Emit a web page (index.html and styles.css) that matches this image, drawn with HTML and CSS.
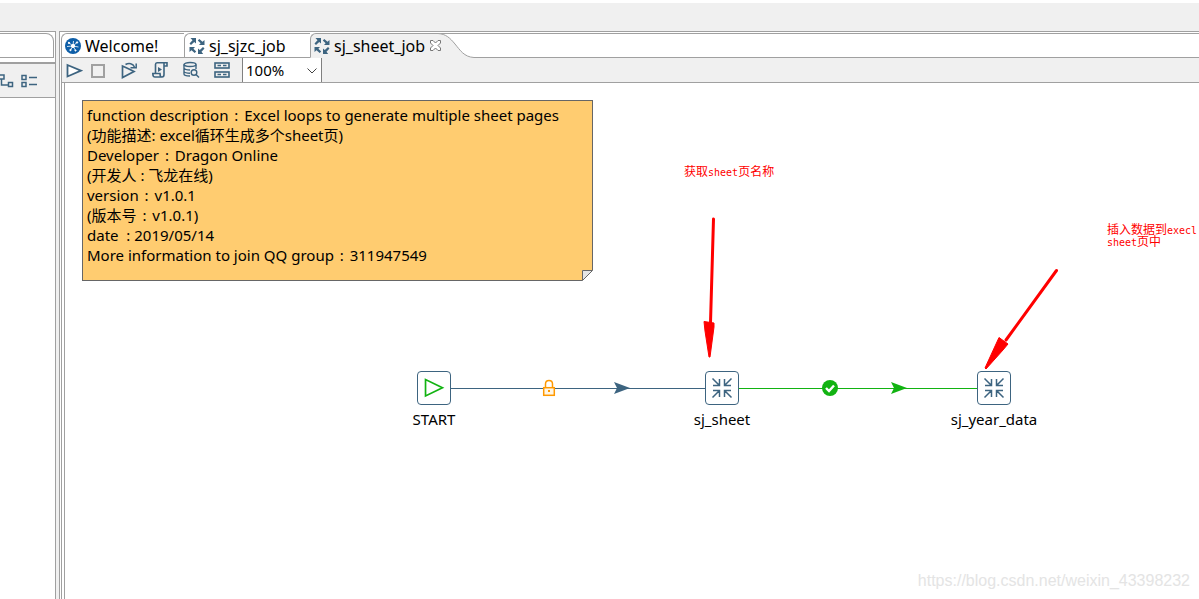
FILE: index.html
```html
<!DOCTYPE html>
<html lang="en">
<head>
<meta charset="utf-8">
<title>sj_sheet_job</title>
<link rel="stylesheet" href="styles.css">
</head>
<body>
<svg class="defs" aria-hidden="true">
  <symbol id="expand" viewBox="0 0 16 16">
    <g fill="#3d6480"><path d="M1.500 0H7v5.500L5.200 4 2 7 .5 5.500 3.500 2.200z"/><path d="M15.500 7H10l1.600-1.800L8.800 2.500 10.300 1l3.200 2.800L15.500 2z"/><path d="M.5 9H6L4.400 10.800l2.800 2.700L5.700 15l-3.200-2.800L.5 14z"/><path d="M9 16v-5.500l1.800 1.500L14 9l1.500 1.500-3 3.300 1.700 2.200z"/></g>
  </symbol>
  <symbol id="collapse" viewBox="0 0 32 32">
    <g fill="none" stroke="#3d6480" stroke-width="1.5"><path d="M6.500 6.500l7 7M7 13.500h6.500V7M25.500 6.500l-7 7M18.500 7v6.500H25M6.500 25.500l7-7M7 18.500h6.500V25M25.500 25.500l-7-7M18.500 25v-6.500H25"/></g>
  </symbol>
</svg>
<div class="app">
  <div class="menu-strip"></div>
  <main class="workspace">
    <aside class="side">
      <div class="side-head"><div class="side-tab"></div></div>
      <div class="side-tools">
        <button class="tool" aria-label="Tree"><svg width="14" height="14" viewBox="0 0 14 14" fill="none" stroke="#3d6480" stroke-width="1.500"><rect x="-1" y="1" width="5" height="4"/><path d="M1.500 5v6H8"/><rect x="8.500" y="8.500" width="4" height="4"/></svg></button>
        <button class="tool" aria-label="List"><svg width="16" height="14" viewBox="0 0 16 14" fill="none" stroke="#3d6480" stroke-width="1.500"><rect x="1" y="1.500" width="4" height="4"/><rect x="1" y="8.500" width="4" height="4"/><path d="M8 3.500h8M8 10.500h8"/></svg></button>
      </div>
      <div class="side-body"></div>
    </aside>
    <section class="editor">
      <nav class="tabs">
        <button class="tab first"><svg width="16" height="16" viewBox="0 0 16 16"><circle cx="8" cy="8" r="8" fill="#0f5fa8"/><g stroke="#fff" fill="#fff"><path d="M3 4l5 4M12.500 4L8 8M2 8.500L8 8M8 8l5.500 1M8 8l-3 5M8 8l2.500 4.500M8.500 3L8 8" stroke-width=".8"/><circle cx="8" cy="8" r="1.600"/><circle cx="4" cy="5" r=".7"/><circle cx="12" cy="4.500" r=".7"/><circle cx="5.500" cy="12" r=".7"/><circle cx="10.500" cy="12.500" r=".6"/></g></svg>Welcome!</button>
        <button class="tab second"><svg width="16" height="16"><use href="#expand"/></svg>sj_sjzc_job</button>
        <button class="tab active"><svg width="16" height="16"><use href="#expand"/></svg>sj_sheet_job<svg class="close" width="11" height="11" viewBox="0 0 11 11" fill="#fff" stroke="#777"><path d="M.5.5h2.500l2.500 2.500L8 .5h2.500V3L8 5.500 10.500 8v2.500H8L5.500 8 3 10.500H.5V8L3 5.500.5 3z"/></svg></button>
        <svg class="tab-curve" width="36" height="25" viewBox="0 0 36 25"><path d="M0 .5C8 1 12 5 17 11S26 24 36 24.500V25H0z" fill="#f0f0f0"/><path d="M0 .5C8 1 12 5 17 11S26 24 36 24.500" fill="none" stroke="#a0a0a0"/></svg>
        <div class="tab-rest"></div>
      </nav>
      <div class="toolbar">
        <button class="tool" aria-label="Run"><svg width="18" height="18" viewBox="0 0 18 18" fill="#fff" stroke="#3d6480" stroke-width="1.800"><path d="M2.500 4v11.500L16 9.700z"/></svg></button>
        <button class="tool" aria-label="Stop"><svg width="18" height="18" viewBox="0 0 18 18" fill="none" stroke="#a0a0a0" stroke-width="2"><rect x="3" y="4" width="12" height="12"/></svg></button>
        <button class="tool" aria-label="Replay"><svg width="18" height="18" viewBox="0 0 18 18" fill="none" stroke="#3d6480" stroke-width="1.700"><path d="M9 8L2.500 5v11.500L14 10.500 9 8"/><path d="M5.500 3.500C9 1.500 13 2.500 14.500 6M10.500 6.800h5.700V2.500" stroke-width="1.500"/></svg></button>
        <button class="tool" aria-label="Script"><svg width="18" height="18" viewBox="0 0 18 18" fill="none" stroke="#3d6480" stroke-width="1.600"><path d="M4.500 12V3.500Q4.500 1.800 6 1.800h10V5h-3v8.500q0 2.500-2 2.500H4q-2.200 0-2.200-3.500H9q0 3.500 2 3.500M13 5V2"/><path d="M7 6v5l4-2.500z" fill="#3d6480" stroke="none"/></svg></button>
        <button class="tool" aria-label="Explore database"><svg width="18" height="18" viewBox="0 0 18 18" fill="none" stroke="#3d6480" stroke-width="1.400"><ellipse cx="8" cy="3.500" rx="6" ry="2"/><path d="M2 3.500V13q0 2 6 2M14 3.500V8M2 7q1 2 6 2M2 10.500q1 1.800 6 1.800"/><circle cx="12" cy="11.500" r="2.800"/><path d="M14 13.500l3 3"/></svg></button>
        <button class="tool" aria-label="Results"><svg width="18" height="18" viewBox="0 0 18 18" fill="none" stroke="#3d6480" stroke-width="1.600"><rect x="2" y="2" width="14" height="5"/><rect x="2" y="11" width="14" height="5"/><path d="M4.500 4.500h3.500M10 4.500h3.500M4.500 13.500h3.500M10 13.500h3.500"/></svg></button>
        <div class="zoom">
          <select aria-label="Zoom"><option>100%</option></select>
          <svg width="10" height="6" viewBox="0 0 10 6" fill="none" stroke="#444"><path d="M.5.5L5 5 9.500.5"/></svg>
        </div>
      </div>
      <div class="canvas">
        <div class="note">
          <p>function description <span>:</span> Excel loops to generate multiple sheet pages</p>
          <p>(功能描述: excel循环生成多个sheet页)</p>
          <p>Developer <span>:</span> Dragon Online</p>
          <p>(开发人 : 飞龙在线)</p>
          <p>version <span>:</span> v1.0.1</p>
          <p>(版本号 <span>:</span> v1.0.1)</p>
          <p>date &nbsp;: 2019/05/14</p>
          <p>More information to join QQ group <span>:</span> 311947549</p>
          <svg class="fold" width="11" height="11" viewBox="0 0 11 11"><path d="M0 11V0h11z" fill="#e4e4e4"/><path d="M11 0v11H0z" fill="#fff"/><path d="M.5 10.500V.5h10z" fill="none" stroke="#666"/></svg>
        </div>
        <svg class="links" width="1134" height="400" viewBox="65 83 1134 400">
          <path d="M451 388.500H705" stroke="#3d6480"/>
          <path d="M739 388.500H977" stroke="#12b312"/>
          <path d="M614 382l16 6-16 6 3-6z" fill="#3d6480"/>
          <path d="M891 382l16 6-16 6 3-6z" fill="#12b312"/>
          <g stroke="#ff9900" stroke-width="1.500" fill="none"><path d="M545.500 387v-3q0-3.500 3.500-3.500t3.500 3.500v3"/><rect x="543.700" y="387.700" width="10.600" height="7.600" fill="#fff6e6"/></g><rect x="548" y="390" width="2" height="2" fill="#ff9900"/>
          <circle cx="830" cy="388" r="8" fill="#12b312"/><path d="M826 388l3 3 5-5.500" fill="none" stroke="#fff" stroke-width="2.400"/>
          <g fill="#f00" stroke="#f00"><path d="M713.500 219L710.500 323" stroke-width="3" stroke-linecap="round"/><path d="M704 321.500l10 1.500v4l-4 30h-1l-4-26z"/><path d="M1056.500 270.500L1006 340" stroke-width="3" stroke-linecap="round"/><path d="M999 337.500l9 6.500-5 6-17 19-1-1 11-24z"/></g>
        </svg>
        <div class="node start"><svg width="34" height="34" viewBox="0 0 34 34" fill="none" stroke="#12b312" stroke-width="1.800"><path d="M8 8v17.500L26 16.700z"/></svg><span>START</span></div>
        <div class="node sheet"><svg width="34" height="34"><use href="#collapse"/></svg><span>sj_sheet</span></div>
        <div class="node year"><svg width="34" height="34"><use href="#collapse"/></svg><span>sj_year_data</span></div>
        <div class="remark get">获取<span>sheet</span>页名称</div>
        <div class="remark insert">插入数据到<span>execl</span><br><span>sheet</span>页中</div>
        <div class="watermark">https://blog.csdn.net/weixin_43398232</div>
      </div>
    </section>
  </main>
</div>
</body>
</html>
```

FILE: styles.css
```css
* { box-sizing: border-box; }
body {
  margin: 0;
  background: #fff;
  color: #000;
  font: 15px/20px "Noto Sans", "Noto Sans CJK SC", sans-serif;
}
button, select { font: inherit; color: inherit; border: 0; margin: 0; padding: 0; background: none; }
svg { display: block; flex: none; }
.defs { position: absolute; width: 0; height: 0; }
.app { display: flex; flex-direction: column; height: 100vh; overflow: hidden; background: #f0f0f0; }
.menu-strip { flex: none; height: 31px; border-top: 3px solid #fff; }
.workspace { flex: 1; display: flex; gap: 3px; min-height: 0; }

.side {
  flex: none; width: 56px; display: flex; flex-direction: column;
  border: 1px solid #a0a0a0; border-width: 1px 1px 0 0; background: #fff;
}
.side-head { height: 32px; padding: 1px 1px 0 0; border-bottom: 2px solid #a0a0a0; }
.side-tab { height: 25px; border: 1px solid #a0a0a0; border-left: 0; border-radius: 0 8px 0 0; }
.side-tools {
  display: flex; gap: 7px; align-items: center; height: 34px;
  background: #f0f0f0; border-bottom: 1px solid #a0a0a0;
}
.side-body { flex: 1; }

.editor {
  flex: 1; min-width: 0; display: flex; flex-direction: column;
  border: 1px solid #a0a0a0; border-width: 1px 0 0 1px; padding: 1px 0 0 1px; background: #fff;
}
.tabs { display: flex; flex: none; height: 25px; font-size: 16px; }
.tab { display: flex; align-items: center; gap: 4px; border-top: 1px solid #a0a0a0; border-bottom: 1px solid #a0a0a0; white-space: nowrap; }
.tab.first { width: 123px; padding-left: 3px; border-left: 1px solid #a0a0a0; border-top-left-radius: 6px; }
.tab.second { width: 126px; padding-left: 4px; border-left: 1px solid #a0a0a0; border-top-left-radius: 6px; }
.tab.active { z-index: 1; width: 128px; padding-left: 3px; border-left: 1px solid #a0a0a0; border-bottom-color: #f0f0f0; border-top-left-radius: 6px; background: #f0f0f0; }
.close { margin-left: 1px; }
.tab-rest { flex: 1; border-top: 1px solid #a0a0a0; border-bottom: 1px solid #a0a0a0; }
.tab-curve { background: linear-gradient(#a0a0a0 1px, #fff 1px); }

.toolbar {
  display: flex; flex: none; align-items: center; height: 25px; padding-left: 3px;
  background: #f0f0f0; border-left: 1px solid #a0a0a0; border-bottom: 1px solid #a0a0a0;
}
.toolbar .tool { margin-right: 13px; }
.toolbar .tool:nth-child(1) { margin-right: 6px; }
.zoom { position: relative; align-self: stretch; width: 80px; margin-left: -2px; background: #fff; border: 1px solid #808080; border-width: 0 1px; }
.zoom select { appearance: none; width: 100%; height: 24px; padding-left: 3px; }
.zoom svg { position: absolute; right: 4px; top: 10px; pointer-events: none; }

.canvas {
  position: relative; flex: 1; min-height: 0; overflow: hidden;
  border-left: 4px double #a0a0a0; background: #fff;
}
.note {
  position: absolute; left: 17px; top: 17px; width: 511px; padding: 4px 4px 15px;
  border: 1px solid #666; background: #ffcc70; white-space: nowrap;
}
.note p { margin: 0; height: 20px; }
.note span { padding: 0 2px; }
.fold { position: absolute; right: -1px; bottom: -1px; }
.links { position: absolute; left: 0; top: 0; }
.node { position: absolute; top: 288px; width: 120px; display: flex; flex-direction: column; align-items: center; gap: 4px; }
.node svg { border: 1px solid #3d6480; border-radius: 4px; background: #fff; }
.start { left: 309px; }
.sheet { left: 597px; }
.year { left: 869px; }
.remark { position: absolute; color: #f00; font-size: 12px; line-height: 12px; white-space: nowrap; }
.remark span { font-family: "DejaVu Sans Mono", monospace; font-size: 10px; line-height: 8px; }
.get { left: 619px; top: 83px; }
.insert { left: 1042px; top: 141px; }
.watermark { position: absolute; right: 9px; bottom: 8px; color: #e4e4e4; font-family: "Liberation Sans", sans-serif; font-size: 16px; }
```
